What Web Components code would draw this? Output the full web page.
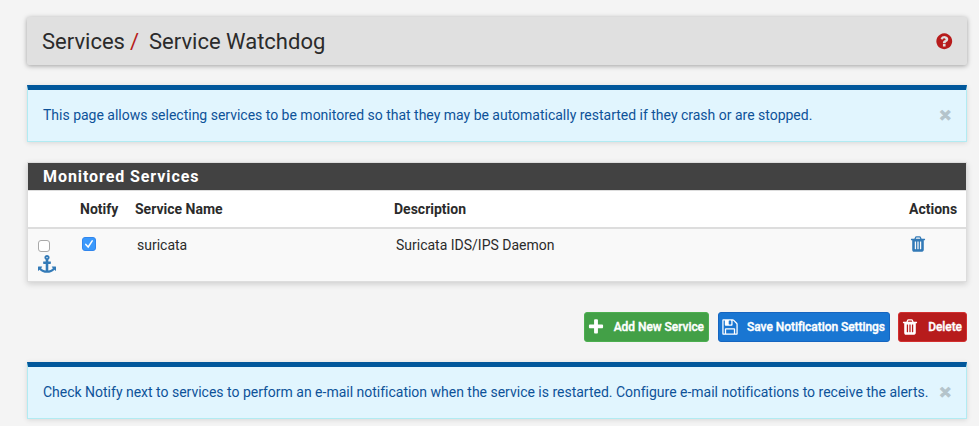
<!DOCTYPE html>
<html lang="en"><head><meta charset="utf-8"><title>Service Watchdog</title>
<style>
html,body{margin:0;background:#f4f4f4;overflow:hidden}
body{font:14px/20px Roboto,sans-serif;color:#2b2b2b}
</style></head><body>
<watchdog-page></watchdog-page>
<script>
const icons={
plus:'M1600 736v192q0 40-28 68t-68 28h-416v416q0 40-28 68t-68 28h-192q-40 0-68-28t-28-68v-416h-416q-40 0-68-28t-28-68v-192q0-40 28-68t68-28h416v-416q0-40 28-68t68-28h192q40 0 68 28t28 68v416h416q40 0 68 28t28 68z',
help:'M1024 1376v-192q0-14-9-23t-23-9h-192q-14 0-23 9t-9 23v192q0 14 9 23t23 9h192q14 0 23-9t9-23zm256-672q0-88-55.5-163t-138.5-116-170-41q-243 0-371 213-15 24 8 42l132 100q7 6 19 6 16 0 25-12 53-68 86-92 34-24 86-24 48 0 85.5 26t37.5 59q0 38-20 61t-68 45q-63 28-115.5 86.5t-52.5 125.5v36q0 14 9 23t23 9h192q14 0 23-9t9-23q0-19 21.5-49.5t54.5-49.5q32-18 49-28.5t46-35 44.5-48 28-60.5 12.5-81zm384 192q0 209-103 385.5t-279.5 279.5-385.5 103-385.5-103-279.5-279.5-103-385.5 103-385.5 279.5-279.5 385.5-103 385.5 103 279.5 279.5 103 385.5z',
trash:'M704 1376v-704q0-14-9-23t-23-9h-64q-14 0-23 9t-9 23v704q0 14 9 23t23 9h64q14 0 23-9t9-23zm256 0v-704q0-14-9-23t-23-9h-64q-14 0-23 9t-9 23v704q0 14 9 23t23 9h64q14 0 23-9t9-23zm256 0v-704q0-14-9-23t-23-9h-64q-14 0-23 9t-9 23v704q0 14 9 23t23 9h64q14 0 23-9t9-23zm-544-992h448l-48-117q-7-9-17-11h-317q-10 2-17 11zm928 32v64q0 14-9 23t-23 9h-96v948q0 83-47 143.5t-113 60.5h-832q-66 0-113-58.5t-47-141.5v-952h-96q-14 0-23-9t-9-23v-64q0-14 9-23t23-9h309l70-167q15-37 54-63t79-26h320q40 0 79 26t54 63l70 167h309q14 0 23 9t9 23z',
save:'M512 1536h768v-384h-768v384zm896 0h128v-896q0-14-10-38.5t-20-34.5l-281-281q-10-10-34-20t-39-10v416q0 40-28 68t-68 28h-576q-40 0-68-28t-28-68v-416h-128v1280h128v-416q0-40 28-68t68-28h832q40 0 68 28t28 68v416zm-384-928v-320q0-13-9.5-22.5t-22.5-9.5h-192q-13 0-22.5 9.5t-9.5 22.5v320q0 13 9.5 22.5t22.5 9.5h192q13 0 22.5-9.5t9.5-22.5zm640 32v928q0 40-28 68t-68 28h-1344q-40 0-68-28t-28-68v-1344q0-40 28-68t68-28h928q40 0 88 20t76 48l280 280q28 28 48 76t20 88z',
anchor:'M960 256q0-26-19-45t-45-19-45 19-19 45 19 45 45 19 45-19 19-45zm832 928v352q0 22-20 30-8 2-12 2-12 0-23-9l-93-93q-119 143-318.5 226.5t-429.5 83.5-429.5-83.5-318.5-226.5l-93 93q-9 9-23 9-4 0-12-2-20-8-20-30v-352q0-14 9-23t23-9h352q22 0 30 20 8 19-7 35l-100 100q67 91 189.5 153.5t271.5 82.5v-647h-192q-26 0-45-19t-19-45v-128q0-26 19-45t45-19h192v-163q-58-34-93-92.5t-35-128.5q0-106 75-181t181-75 181 75 75 181q0 70-35 128.5t-93 92.5v163h192q26 0 45 19t19 45v128q0 26-19 45t-45 19h-192v647q149-20 271.5-82.5t189.5-153.5l-100-100q-15-16-7-35 8-20 30-20h352q14 0 23 9t9 23z'};
const define=(name,html)=>customElements.define(name,class extends HTMLElement{
  constructor(){super();this.attachShadow({mode:'open'}).innerHTML=html;}
});
customElements.define('wd-icon',class extends HTMLElement{
  connectedCallback(){
    if(this.shadowRoot)return;
    const s=this.getAttribute('size')||18;
    this.attachShadow({mode:'open'}).innerHTML=`<style>:host{display:block;flex:none;width:${s}px;height:${s}px}svg{display:block}</style><svg width="${s}" height="${s}" viewBox="0 0 1792 1792" fill="currentColor"><path d="${icons[this.getAttribute('name')]}"/></svg>`;
  }
});
define('wd-header',`<style>
:host{display:flex;align-items:center;justify-content:space-between;box-sizing:border-box;height:48px;padding:0 14px 0 15px;background:#e0e0e0;border-radius:2px;box-shadow:0 1px 5px rgba(0,0,0,.35)}
h1{margin:0;padding-top:2px;font-weight:400;font-size:22px;line-height:46px;white-space:pre}
b{font-weight:400;color:#b71c1c;margin:0 10px 0 5px}
wd-icon{color:#b71c1c}
</style><h1><slot></slot><b>/</b><slot name="page"></slot></h1><wd-icon name="help" size="18.5"></wd-icon>`);
define('wd-alert',`<style>
:host{display:flex;justify-content:space-between;box-sizing:border-box;height:57px;padding:15px;border:1px solid #b2ebf2;border-top:5px solid #01579b;background:#e1f5fe;color:#0d5299;box-shadow:0 1px 5px rgba(0,0,0,.12)}
p{margin:0;white-space:nowrap;letter-spacing:-.008px}
i{font:bold 21px/20px Roboto,sans-serif;color:#b4c4cb;-webkit-text-stroke:.9px #b4c4cb}
</style><p><slot></slot></p><i>×</i>`);
define('wd-check',`<style>
:host{display:block;box-sizing:border-box;width:12px;height:12px;border:1px solid #a9a9a9;border-radius:3px;background:#fff}
svg{display:none}
:host([checked]){width:14px;height:14px;border-color:#3186ed;background:#3b99fc}
:host([checked]) svg{display:block}
</style><svg width="12" height="12" viewBox="0 0 12 12"><path d="M2.8 6.4 5.2 9 9.2 2.8" fill="none" stroke="#fff" stroke-width="1.5" stroke-linecap="round"/></svg>`);
define('wd-panel',`<style>
:host{display:block;box-sizing:border-box;height:120px;border:1px solid #ddd;background:#fff;box-shadow:0 2px 6px rgba(0,0,0,.16)}
h2{margin:0;box-sizing:border-box;height:28px;padding-left:15px;background:#424242;border-bottom:1px solid #ddd;color:#fff;font:bold 16px/27px Roboto,sans-serif;letter-spacing:.92px}
</style><h2><slot name="title"></slot></h2><slot></slot>`);
define('wd-row',`<style>
:host{display:grid;grid-template-columns:52px 55px 259px 515px 57px;box-sizing:border-box;height:52px;background:#f9f9f9}
:host([head]){height:38px;background:#fff;border-bottom:2px solid #ddd;font-weight:700;line-height:36px}
</style><slot></slot>`);
define('wd-button',`<style>
:host{display:flex;align-items:center;box-sizing:border-box;height:30px;padding:0 4px 0 2px;border:1px solid var(--edge);border-radius:3px;background:var(--fill);color:#fff;font-weight:500;font-size:12px;letter-spacing:-.05px;-webkit-text-stroke:.35px #fff;white-space:nowrap;justify-content:space-between}
</style><slot name="icon"></slot><span><slot></slot></span>`);
define('watchdog-page',`<style>
:host{display:block;padding:17px 12px 0 27px}
wd-alert{margin:20px 0}
.first{display:grid;padding:11px 0 0 10px;align-content:start;row-gap:2.5px}
.actions{display:flex;justify-content:flex-end;margin-top:30px;gap:8px}
.add{margin-right:1px}
.pad{padding:6px 0 0 2px}
.blue{color:#337ab7}
.notify{padding:8px 0 0 2px}
.remove{padding-top:6px}
</style>
<wd-header>Services<span slot="page">Service Watchdog</span></wd-header>
<wd-alert>This page allows selecting services to be monitored so that they may be automatically restarted if they crash or are stopped.</wd-alert>
<wd-panel><span slot="title">Monitored Services</span>
<wd-row head><span></span><span>Notify</span><span>Service Name</span><span>Description</span><span>Actions</span></wd-row>
<wd-row><div class="first"><wd-check></wd-check><wd-icon class="blue" name="anchor" size="18"></wd-icon></div><div class="notify"><wd-check checked></wd-check></div><span class="pad">suricata</span><span class="pad">Suricata IDS/IPS Daemon</span><div class="remove"><wd-icon class="blue" name="trash" size="18"></wd-icon></div></wd-row>
</wd-panel>
<div class="actions">
<wd-button class="add" style="width:125px;--fill:#43a047;--edge:#4caf50"><wd-icon slot="icon" name="plus" size="18"></wd-icon>Add New Service</wd-button>
<wd-button style="width:172px;--fill:#1976d2;--edge:#1565c0"><wd-icon slot="icon" name="save" size="18"></wd-icon>Save Notification Settings</wd-button>
<wd-button style="width:69px;--fill:#b71c1c;--edge:#d32f2f"><wd-icon slot="icon" name="trash" size="18"></wd-icon>Delete</wd-button>
</div>
<wd-alert>Check Notify next to services to perform an e-mail notification when the service is restarted. Configure e-mail notifications to receive the alerts.</wd-alert>`);
</script></body></html>
